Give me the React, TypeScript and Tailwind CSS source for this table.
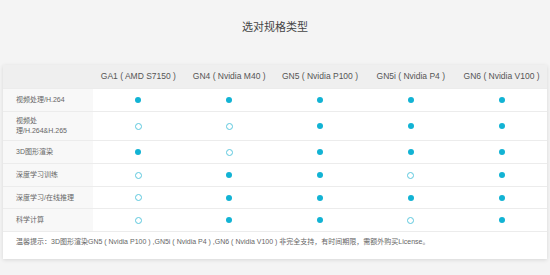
const cols = [
  "GA1 ( AMD S7150 )",
  "GN4 ( Nvidia M40 )",
  "GN5 ( Nvidia P100 )",
  "GN5i ( Nvidia P4 )",
  "GN6 ( Nvidia V100 )",
];

// 1 = supported, 0 = partial / not supported
const rows: { label: React.ReactNode; h: string; support: number[] }[] = [
  { label: "视频处理/H.264", h: "h-[23px]", support: [1, 1, 1, 1, 1] },
  {
    label: (
      <>
        视频处
        <br />
        理/H.264&amp;H.265
      </>
    ),
    h: "h-[29px]",
    support: [0, 0, 1, 1, 1],
  },
  { label: "3D图形渲染", h: "h-[23px]", support: [1, 0, 1, 1, 1] },
  { label: "深度学习训练", h: "h-[23px]", support: [0, 1, 1, 0, 1] },
  { label: "深度学习/在线推理", h: "h-[22px]", support: [0, 1, 1, 1, 1] },
  { label: "科学计算", h: "h-[23px]", support: [0, 1, 1, 0, 1] },
];

function Dot({ on }: { on: boolean }) {
  return on ? (
    <span className="block w-[6px] h-[6px] rounded-full bg-[#12b3d4]" />
  ) : (
    <span className="block w-[7px] h-[7px] rounded-full border border-[#5cc8de] bg-white" />
  );
}

export default function App() {
  return (
    <div
      className="w-[550px] h-[275px] bg-[#f4f4f4] overflow-hidden"
      style={{ fontFamily: '"Liberation Sans", "Noto Sans CJK SC", sans-serif' }}
    >
      <div className="h-[65px] pt-[20px] text-center text-[11px] leading-[15px] text-[#444]">
        选对规格类型
      </div>

      <div className="mx-[3px] w-[544px] bg-white shadow-[0_1px_4px_rgba(0,0,0,0.12)]">
        {/* header */}
        <div className="grid grid-cols-[90px_repeat(5,1fr)] h-[23px] bg-[#efefef] text-[8.5px] text-[#555]">
          <div />
          {cols.map((c) => (
            <div key={c} className="flex items-center justify-center whitespace-nowrap">
              {c}
            </div>
          ))}
        </div>

        {rows.map((r, i) => (
          <div
            key={i}
            className={`grid grid-cols-[90px_repeat(5,1fr)] border-t border-[#ececec] ${r.h}`}
          >
            <div className="flex items-center pl-[13px] bg-[#f8f8f8] text-[7px] leading-[10px] text-[#666]">
              <span>{r.label}</span>
            </div>
            {r.support.map((s, j) => (
              <div key={j} className="flex items-center justify-center">
                <Dot on={s === 1} />
              </div>
            ))}
          </div>
        ))}

        <div className="h-[28px] border-t border-[#ececec] pl-[13px] pt-[5px] text-[7px] leading-[10px] text-[#666] whitespace-nowrap">
          温馨提示：3D图形渲染GN5 ( Nvidia P100 ) ,GN5i ( Nvidia P4 ) ,GN6 ( Nvidia V100 ) 非完全支持，有时间期限，需额外购买License。
        </div>
      </div>
    </div>
  );
}
